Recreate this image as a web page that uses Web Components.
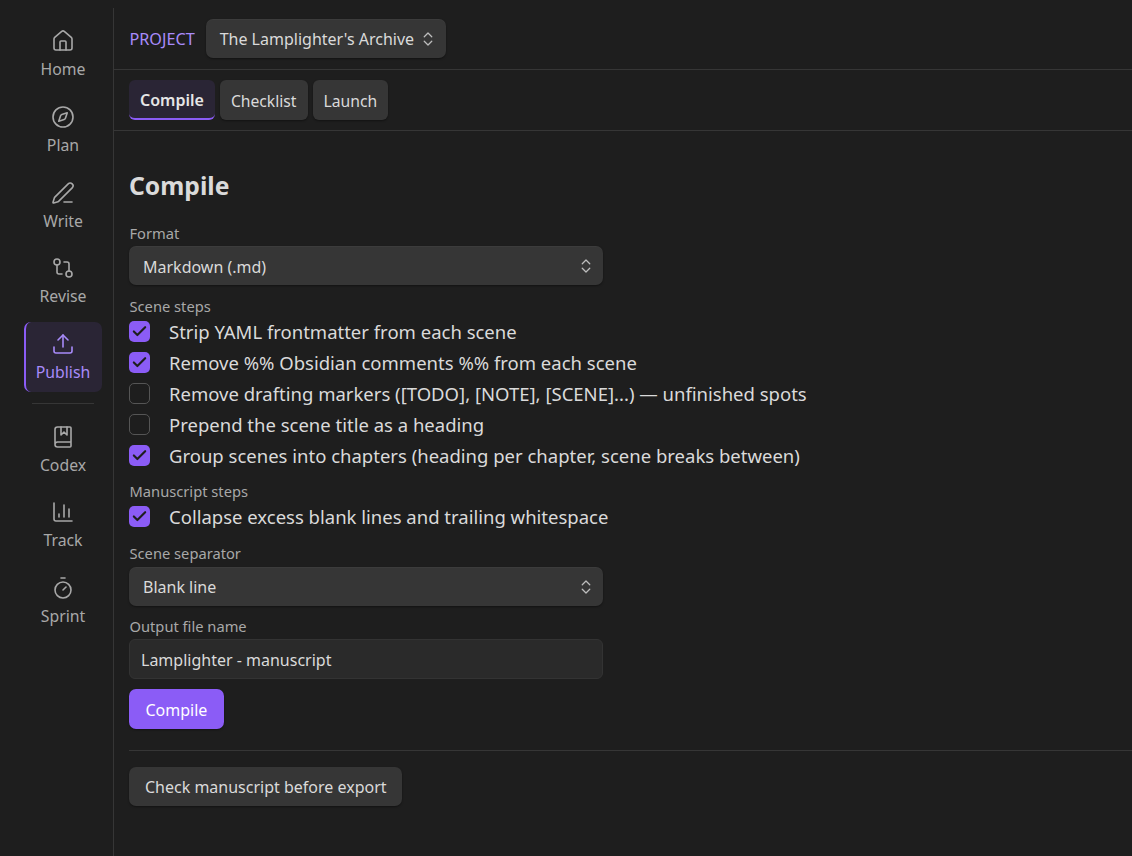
<!DOCTYPE html>
<html><head><meta charset="utf-8"><title>Compile</title>
<style>
html,body{margin:0;padding:0;background:#1e1e1e;height:100%}
body{font-family:"Noto Sans",sans-serif;color:#dadada;overflow:hidden}
</style></head><body>
<app-shell>
  <side-nav slot="nav">
    <nav-item icon="home" label="Home"></nav-item>
    <nav-item icon="compass" label="Plan"></nav-item>
    <nav-item icon="pen" label="Write"></nav-item>
    <nav-item icon="compare" label="Revise"></nav-item>
    <nav-item icon="upload" label="Publish" active></nav-item>
    <nav-sep></nav-sep>
    <nav-item icon="book" label="Codex"></nav-item>
    <nav-item icon="chart" label="Track"></nav-item>
    <nav-item icon="timer" label="Sprint"></nav-item>
  </side-nav>
  <project-bar slot="main"></project-bar>
  <tab-bar slot="main"></tab-bar>
  <compile-panel slot="main"></compile-panel>
</app-shell>
<script>
const ICONS={
home:'<path d="M15 21v-8a1 1 0 0 0-1-1h-4a1 1 0 0 0-1 1v8"/><path d="M3 10a2 2 0 0 1 .709-1.528l7-5.999a2 2 0 0 1 2.582 0l7 5.999A2 2 0 0 1 21 10v9a2 2 0 0 1-2 2H5a2 2 0 0 1-2-2z"/>',
compass:'<circle cx="12" cy="12" r="10"/><path d="m16.24 7.76-1.804 5.411a2 2 0 0 1-1.265 1.265L7.76 16.24l1.804-5.411a2 2 0 0 1 1.265-1.265z"/>',
pen:'<path d="M13 21h8"/><path d="M21.174 6.812a1 1 0 0 0-3.986-3.987L3.842 16.174a2 2 0 0 0-.5.83l-1.321 4.352a.5.5 0 0 0 .623.622l4.353-1.32a2 2 0 0 0 .83-.497z"/>',
compare:'<circle cx="18" cy="18" r="3"/><circle cx="6" cy="6" r="3"/><path d="M13 6h3a2 2 0 0 1 2 2v7"/><path d="M11 18H8a2 2 0 0 1-2-2V9"/>',
upload:'<path d="M12 3v12"/><path d="m17 8-5-5-5 5"/><path d="M21 15v4a2 2 0 0 1-2 2H5a2 2 0 0 1-2-2v-4"/>',
book:'<path d="M10 2v8l3-3 3 3V2"/><path d="M4 19.5v-15A2.5 2.5 0 0 1 6.5 2H19a1 1 0 0 1 1 1v18a1 1 0 0 1-1 1H6.5a1 1 0 0 1 0-5H20"/>',
chart:'<path d="M3 3v16a2 2 0 0 0 2 2h16"/><path d="M18 17V9"/><path d="M13 17V5"/><path d="M8 17v-3"/>',
timer:'<line x1="10" x2="14" y1="2" y2="2"/><line x1="12" x2="15" y1="14" y2="11"/><circle cx="12" cy="14" r="8"/>',
updown:'<path d="m7 15 5 5 5-5"/><path d="m7 9 5-5 5 5"/>',
check:'<path d="M20 6 9 17l-5-5"/>'
};
const svg=(n,s,w=2)=>`<svg xmlns="http://www.w3.org/2000/svg" width="${s}" height="${s}" viewBox="0 0 24 24" fill="none" stroke="currentColor" stroke-width="${w}" stroke-linecap="round" stroke-linejoin="round">${ICONS[n]}</svg>`;
class Base extends HTMLElement{
  constructor(){super();this.attachShadow({mode:'open'});}
  connectedCallback(){this.render();}
  esc(s){return String(s??'').replace(/&/g,'&amp;').replace(/</g,'&lt;');}
}
class AppShell extends Base{render(){this.shadowRoot.innerHTML=`<style>
:host{display:flex;height:856px;padding-top:8px;box-sizing:border-box;background:#1e1e1e}
.nav{display:block;width:114px;flex:none;border-right:1px solid #363636;box-sizing:border-box}
.main{flex:1;min-width:0;display:flex;flex-direction:column;margin-top:-8px}
</style><div class="nav"><slot name="nav"></slot></div><div class="main"><slot name="main"></slot></div>`;}}
class SideNav extends Base{render(){this.shadowRoot.innerHTML=`<style>
:host{display:flex;flex-direction:column;align-items:center;gap:5.75px;padding:11px 11px 0 24px;width:78px}
</style><slot></slot>`;}}
class NavItem extends Base{render(){const a=this.hasAttribute('active');this.shadowRoot.innerHTML=`<style>
:host{display:flex;flex-direction:column;align-items:center;box-sizing:border-box;width:78px;height:70px;padding-top:10px;gap:5px;border-radius:7px;color:#a8a8a8;${a?'color:#a88bfa;background:#2a2535;border-left:2px solid #8b5cf6;':''}}
svg{display:block;${a?'margin-left:-2px;':''}}
span{font-size:15.8px;line-height:22px;${a?'margin-left:-2px;':''}}
</style>${svg(this.getAttribute('icon'),24,1.6)}<span>${this.esc(this.getAttribute('label'))}</span>`;}}
class NavSep extends Base{render(){this.shadowRoot.innerHTML=`<style>:host{display:block;width:62px;height:1px;background:#363636;margin:5px 0 5px}</style>`;}}
class SelectBox extends Base{render(){this.shadowRoot.innerHTML=`<style>
:host{display:flex;align-items:center;box-sizing:border-box;height:var(--h,39px);width:var(--w,474px);padding:0 8.5px 0 14px;background:#363636;border-radius:7px;color:#dadada;box-shadow:0 1px 2px rgba(0,0,0,.4),inset 0 1px 0 rgba(255,255,255,.03);font-size:16px;justify-content:space-between}
span{padding-top:var(--pt,1px)}
svg{color:#bdbdbd;flex:none}
</style><span><slot></slot></span>${svg('updown',18,1.7)}`;}}
class ProjectBar extends Base{render(){this.shadowRoot.innerHTML=`<style>
:host{display:flex;align-items:center;gap:11px;height:70px;box-sizing:border-box;padding:8px 0 0 15.5px;border-bottom:1px solid #363636}
.l{font-size:16.2px;color:#a88bfa;line-height:20px}
select-box{--w:240px;--h:39px}
</style><span class="l">PROJECT</span><select-box>The Lamplighter's Archive</select-box>`;}}
class TabBtn extends Base{render(){const a=this.hasAttribute('active');this.shadowRoot.innerHTML=`<style>
:host{display:flex;align-items:center;box-sizing:border-box;height:40px;padding:1px 11px 0;border-radius:6px;font-size:15.7px;background:#363636;color:#dadada;box-shadow:0 1px 2px rgba(0,0,0,.4);${a?'background:#2a2535;color:#e6e6e6;font-weight:600;font-size:16px;border-bottom:2px solid #8b5cf6;box-shadow:none;':''}}
</style><slot></slot>`;}}
class TabBar extends Base{render(){this.shadowRoot.innerHTML=`<style>
:host{display:flex;gap:5px;align-items:center;height:61px;box-sizing:border-box;padding:0 0 0 15px;border-bottom:1px solid #363636}
</style><tab-btn active>Compile</tab-btn><tab-btn>Checklist</tab-btn><tab-btn>Launch</tab-btn>`;}}
class CheckRow extends Base{render(){const c=this.hasAttribute('checked');this.shadowRoot.innerHTML=`<style>
:host{display:flex;align-items:center;height:31px;font-size:18.5px;color:#dadada}
.b{flex:none;box-sizing:border-box;width:21px;height:21px;border-radius:5px;margin-right:19px;display:flex;align-items:center;justify-content:center;${c?'background:#8b5cf6;color:#1e1e1e;':'border:1px solid #555;'}}
</style><span class="b">${c?svg('check',17,3):''}</span><span><slot></slot></span>`;}}
class FieldLabel extends Base{render(){this.shadowRoot.innerHTML=`<style>:host{display:block;font-size:14.7px;line-height:19px;color:#a8a8a8;padding-left:.5px}</style><slot></slot>`;}}
class ActionBtn extends Base{render(){const p=this.hasAttribute('primary');this.shadowRoot.innerHTML=`<style>
:host{display:inline-flex;align-items:center;box-sizing:border-box;height:var(--bh,40px);padding:var(--tp,0) ${p?16.5:15}px 0 ${p?16.5:16}px;border-radius:7px;font-size:16px;background:${p?'#8b5cf6':'#363636'};color:${p?'#fff':'#dadada'};box-shadow:0 1px 2px rgba(0,0,0,.4)}
</style><slot></slot>`;}}
class TextField extends Base{render(){this.shadowRoot.innerHTML=`<style>
:host{display:flex;align-items:center;box-sizing:border-box;width:474px;height:40px;padding:1px 11px 0;background:#2a2a2a;border:1px solid #333;border-radius:6px;font-size:16px;color:#dadada}
</style><slot></slot>`;}}
class CompilePanel extends Base{render(){this.shadowRoot.innerHTML=`<style>
:host{display:block;padding:0 0 0 15px}
h2{margin:0;padding-top:37px;font-size:24.7px;line-height:36px;font-weight:700;color:#dadada;height:36px}
field-label,select-box,text-field,action-btn{display:flex}
.hr{height:1px;background:#363636;margin-left:0}
action-btn{width:max-content}
</style>
<h2>Compile</h2>
<field-label style="margin-top:20px">Format</field-label>
<select-box style="margin-top:3px;--pt:2px">Markdown (.md)</select-box>
<field-label style="margin-top:12px">Scene steps</field-label>
<check-row checked>Strip YAML frontmatter from each scene</check-row>
<check-row checked>Remove %% Obsidian comments %% from each scene</check-row>
<check-row>Remove drafting markers ([TODO], [NOTE], [SCENE]...) — unfinished spots</check-row>
<check-row>Prepend the scene title as a heading</check-row>
<check-row checked>Group scenes into chapters (heading per chapter, scene breaks between)</check-row>
<field-label style="margin-top:11px">Manuscript steps</field-label>
<check-row checked>Collapse excess blank lines and trailing whitespace</check-row>
<field-label style="margin-top:12px">Scene separator</field-label>
<select-box style="margin-top:4px">Blank line</select-box>
<field-label style="margin-top:11px">Output file name</field-label>
<text-field style="margin-top:3px">Lamplighter - manuscript</text-field>
<action-btn primary style="margin-top:10px;--tp:1px">Compile</action-btn>
<div class="hr" style="margin-top:21px"></div>
<action-btn style="margin-top:16px;--bh:39px">Check manuscript before export</action-btn>`;}}
for(const [n,c] of Object.entries({'app-shell':AppShell,'side-nav':SideNav,'nav-item':NavItem,'nav-sep':NavSep,'select-box':SelectBox,'project-bar':ProjectBar,'tab-btn':TabBtn,'tab-bar':TabBar,'check-row':CheckRow,'field-label':FieldLabel,'action-btn':ActionBtn,'text-field':TextField,'compile-panel':CompilePanel}))customElements.define(n,c);
</script>
</body></html>
